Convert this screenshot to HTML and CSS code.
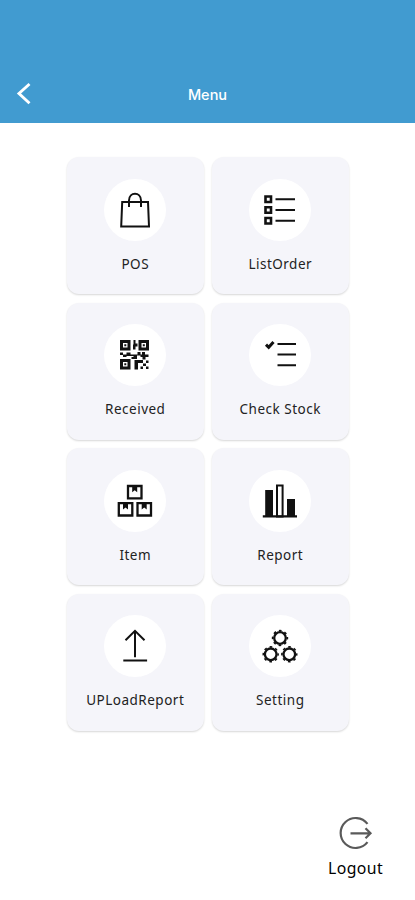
FILE: index.html
```html
<!DOCTYPE html>
<html lang="en">
<head>
<meta charset="utf-8">
<meta name="viewport" content="width=device-width, initial-scale=1">
<title>Menu</title>
<link rel="stylesheet" href="styles.css">
</head>
<body>
<header class="bar">
  <button class="back" aria-label="Back"><svg width="18" height="24" viewBox="0 0 18 24"><path d="M14.500 2 4 11.500 14.500 21.200" fill="none" stroke="#fff" stroke-width="2.9"/></svg></button>
  <h1 class="title">Menu</h1>
</header>
<main class="grid">
  <a class="card"><span class="disc"><svg class="icon" viewBox="0 0 40 40"><path d="M7.200 12H33L34 36.500H6.200ZM14 17V10.500C14 1.500 26 1.500 26 10.500V17" class="line"/></svg></span><span class="label">POS</span></a>
  <a class="card"><span class="disc"><svg class="icon" viewBox="0 0 40 40"><path d="M5.500 6.500h5.500v5.500h-5.500zM5.500 17.300h5.500v5.500h-5.500zM5.500 28h5.500v5.500h-5.500z" class="line thick"/><path d="M15.500 9.300H35M15.500 20H35M15.500 30.700H35" class="line"/></svg></span><span class="label">ListOrder</span></a>
  <a class="card"><span class="disc"><svg class="icon" viewBox="0 0 40 40"><path d="M6.500 6.500h7.500v7.500h-7.500zM25 6.500h7.500v7.500h-7.500zM6.500 25.500h7.500v7.500h-7.500z" class="line heavy"/><path d="M9.300 9.300h2v2h-2zM27.800 9.300h2v2h-2zM9.300 28.300h2v2h-2zM18.500 5h2v3.500h2v3h-2v3h-2.500v-5h.5zM5 17.500h3v2.500H5zM8 19.500h3.500v2.500H8zM11.500 17.500h4v2h7v-2.500h3v3.500h-3.500v3.500h-5.500v-2h2v-1h-7zM27 17h3v2.500h3.500v2.500h-3v2.500h-3v-2.500h-2v-2.500h1.500zM19.500 25h8.500v3h-5v6.500h-3.500zM31 25.500h2.500v2.500h-2.500zM28 28.500h3v2.500h-3zM25.500 31.500h2.500v2.500h-2.500zM31 31.500h2.500v2.500h-2.500z"/></svg></span><span class="label">Received</span></a>
  <a class="card"><span class="disc"><svg class="icon" viewBox="0 0 40 40"><path d="M6 9.700 8.700 12.300 13.500 7" class="line heavy"/><path d="M17.500 9H36M17.500 19.500H36M17.500 30.300H36" class="line"/></svg></span><span class="label">Check Stock</span></a>
  <a class="card"><span class="disc"><svg class="icon" viewBox="0 0 40 40"><path d="M13 5h13.500v12.300H13zM3.800 22.200h13.500v12.300H3.800zM22.500 22.200H36v12.300H22.500z" class="line box"/><path d="M17.200 5h5v6.200l-2.500-2-2.500 2zM8 22.200h5v6.200l-2.500-2-2.500 2zM26.700 22.200h5v6.200l-2.500-2-2.500 2z"/></svg></span><span class="label">Item</span></a>
  <a class="card"><span class="disc"><svg class="icon" viewBox="0 0 40 40"><path d="M5.200 9H13v26H5.200zM27 18H35v17h-8zM2.800 34.300h34.200v2.200H2.800z"/><path d="M17 4.500h5.600v31h-5.600z" class="line"/></svg></span><span class="label">Report</span></a>
  <a class="card"><span class="disc"><svg class="icon" viewBox="0 0 40 40"><path d="M20 31.300V5M10.500 14.200 20 4.800l9.500 9.400M8.300 34.500h23.800" class="line"/></svg></span><span class="label">UPLoadReport</span></a>
  <a class="card"><span class="disc"><svg class="icon" viewBox="0 0 40 40">
    <defs><g id="gear"><circle r="5.800" class="line cog"/><circle r="7.400" fill="none" stroke="#111" stroke-width="1.600" stroke-dasharray="2.700 3.112" stroke-dashoffset="1.350"/></g></defs>
    <use href="#gear" x="20" y="12"/><use href="#gear" x="10.700" y="28.300"/><use href="#gear" x="29.300" y="28.300"/></svg></span><span class="label">Setting</span></a>
</main>
<footer class="foot">
  <a class="logout"><svg width="36" height="36" viewBox="0 0 36 36"><path d="M29.500 8.800A15 15 0 1 0 29.500 27.200M12.500 18.300H32.500M27.500 13.300l5 5-5 5" fill="none" stroke="#5a5a5a" stroke-width="2.200"/></svg><span>Logout</span></a>
</footer>
</body>
</html>
```
FILE: styles.css
```css
* { box-sizing: border-box; }
body {
  margin: 0;
  height: 900px;
  display: flex;
  flex-direction: column;
  background: #fff;
  color: #222;
  font-family: "Noto Sans", sans-serif;
}
.bar {
  height: 123px;
  padding: 65px 15px 0;
  background: #419bd0;
  display: grid;
  grid-template-columns: 24px 1fr 24px;
  align-items: center;
}
.back {
  padding: 0;
  border: 0;
  background: none;
  height: 24px;
  width: 18px;
}
.back svg { display: block; }
.title {
  margin: 0;
  padding-top: 2px;
  color: #fff;
  text-align: center;
  font: 500 14.5px/20px Inter, sans-serif;
}
.grid {
  display: grid;
  grid-template-columns: 137px 137px;
  grid-auto-rows: 137px;
  gap: 8.5px 8px;
  justify-content: center;
  margin-top: 34px;
}
.card {
  display: flex;
  flex-direction: column;
  align-items: center;
  padding-top: 21.5px;
  border-radius: 12px;
  background: #f5f5fa;
  box-shadow: 0 1px 2px rgba(0, 0, 0, .16);
}
.disc {
  width: 62px;
  height: 62px;
  border-radius: 50%;
  background: #fff;
  display: grid;
  place-items: center;
}
.icon { width: 40px; height: 40px; fill: #111; }
.line { fill: none; stroke: #111; stroke-width: 2; }
.thick { stroke-width: 2.6; }
.heavy { stroke-width: 3; }
.box { stroke-width: 2.3; }
.cog { stroke-width: 2.3; }
.label {
  margin-top: 13px;
  padding-left: .5px;
  font-size: 13.5px;
  line-height: 20px;
  letter-spacing: .5px;
  white-space: nowrap;
}
.foot {
  display: flex;
  justify-content: flex-end;
  margin-top: auto;
  padding: 0 32px 20px 0;
}
.logout {
  display: flex;
  flex-direction: column;
  align-items: center;
  gap: 6px;
  color: #000;
  font-size: 15.8px;
  line-height: 23px;
  letter-spacing: .4px;
}
```
